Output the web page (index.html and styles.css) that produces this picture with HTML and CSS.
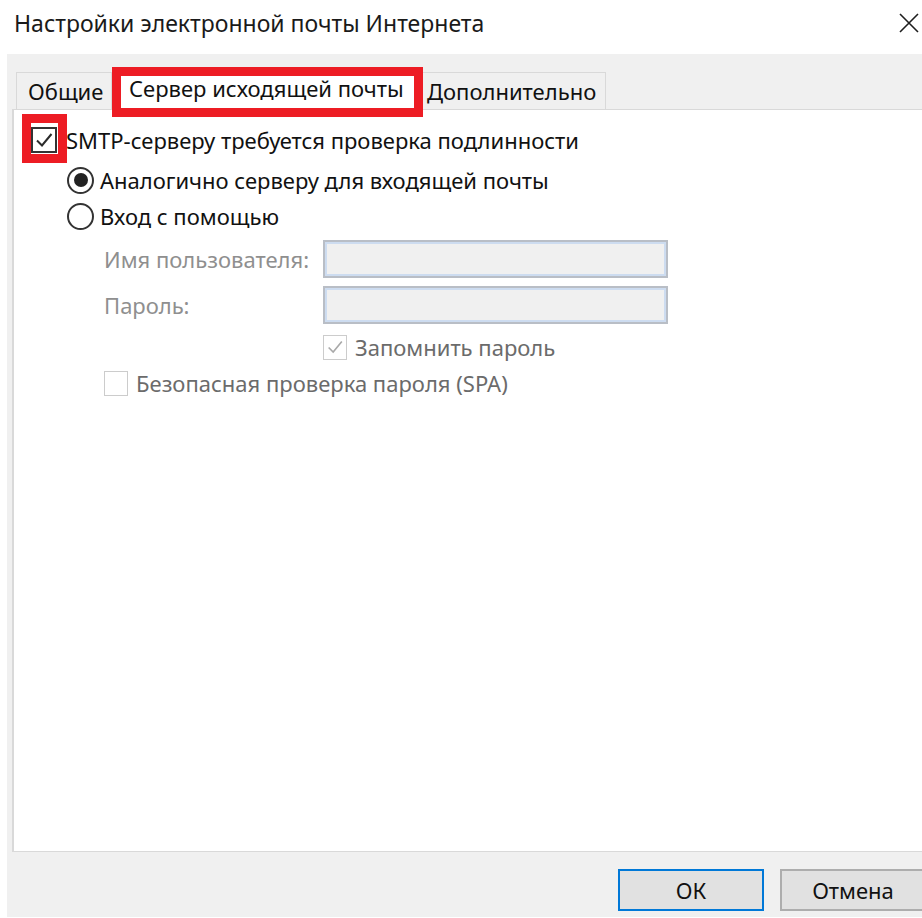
FILE: index.html
```html
<!DOCTYPE html>
<html lang="ru">
<head>
<meta charset="utf-8">
<title>Настройки электронной почты Интернета</title>
<link rel="stylesheet" href="styles.css">
</head>
<body>
<div class="window">
  <div class="titlebar">
    <span class="title">Настройки электронной почты Интернета</span>
    <span class="close" aria-label="Закрыть">
      <svg width="20" height="20" viewBox="0 0 20 20"><path d="M1 1L19 19M19 1L1 19" stroke="#1e1e1e" stroke-width="1.6" fill="none"/></svg>
    </span>
  </div>

  <div class="client">
    <div class="tabs">
      <div class="tab tab-first">Общие</div>
      <div class="tab tab-active">Сервер исходящей почты</div>
      <div class="tab tab-last">Дополнительно</div>
    </div>

    <div class="panel">
      <label class="row row-auth">
        <span class="check checked">
          <svg viewBox="0 0 22 22" width="22" height="22"><path d="M4 11.5L9 16.5L18.5 5" stroke="#2b2b2b" stroke-width="2" fill="none"/></svg>
        </span>
        <span class="text">SMTP-серверу требуется проверка подлинности</span>
      </label>

      <label class="row row-radio1">
        <span class="radio on"><span class="dot"></span></span>
        <span class="text">Аналогично серверу для входящей почты</span>
      </label>

      <label class="row row-radio2">
        <span class="radio"></span>
        <span class="text">Вход с помощью</span>
      </label>

      <div class="field field-user">
        <span class="field-label">Имя пользователя:</span>
        <span class="input"></span>
      </div>

      <div class="field field-pass">
        <span class="field-label">Пароль:</span>
        <span class="input"></span>
      </div>

      <label class="row row-remember">
        <span class="check small disabled">
          <svg viewBox="0 0 22 22" width="20" height="20"><path d="M4 11.5L9 16.5L18.5 5" stroke="#a9a9a9" stroke-width="1.8" fill="none"/></svg>
        </span>
        <span class="text text-dim">Запомнить пароль</span>
      </label>

      <label class="row row-spa">
        <span class="check small disabled"></span>
        <span class="text text-dim">Безопасная проверка пароля (SPA)</span>
      </label>
    </div>

    <div class="footer">
      <button class="btn btn-default">ОК</button>
      <button class="btn">Отмена</button>
    </div>
  </div>

  <!-- red callout frames drawn over the dialog -->
  <div class="callout callout-tab"></div>
  <div class="callout callout-check"></div>
</div>
</body>
</html>
```

FILE: styles.css
```css
* {
  box-sizing: border-box;
}

html, body {
  margin: 0;
  padding: 0;
  background: #ffffff;
}

body {
  width: 922px;
  height: 918px;
  overflow: hidden;
  font-family: "Noto Sans", "Open Sans", sans-serif;
  font-size: 22px;
  color: #111111;
}

.window {
  position: relative;
  width: 922px;
  height: 918px;
}

/* title bar */
.titlebar {
  height: 54px;
  display: flex;
  align-items: center;
  justify-content: space-between;
  padding: 0 3px 8px 14px;
  background: #ffffff;
}

.title {
  font-size: 23px;
  color: #1a1a1a;
  white-space: nowrap;
}

.close {
  display: flex;
  width: 20px;
  height: 20px;
}

/* grey client area */
.client {
  margin-left: 7px;
  height: 863px;
  background: #f0f0f0;
  padding: 18px 0 0 5px;
  display: flex;
  flex-direction: column;
}

/* tab strip */
.tabs {
  display: flex;
  align-items: flex-end;
  height: 37px;
  padding-left: 4px;
}

.tab {
  height: 37px;
  display: flex;
  align-items: center;
  border: 1px solid #d9d9d9;
  border-bottom: none;
  background: #f0f0f0;
  color: #111111;
  white-space: nowrap;
  overflow: hidden;
}

.tab + .tab {
  border-left: none;
}

.tab-first {
  width: 96px;
  padding-left: 11px;
}

.tab-active {
  width: 309px;
  background: #ffffff;
  height: 42px;
  padding: 0 0 4px 17px;
  margin-bottom: -1px;
  position: relative;
  z-index: 1;
}

.tab-last {
  width: 185px;
  padding-left: 6px;
}

/* tab page */
.panel {
  height: 743px;
  background: #ffffff;
  border: 1px solid #d9d9d9;
  border-right: none;
  border-left-width: 2px;
  padding: 12px 0 0 17px;
}

.row {
  display: flex;
  align-items: center;
  height: 36px;
}

.row .text {
  white-space: nowrap;
}

.row-auth .text {
  margin-left: 9px;
}

.row-radio1 {
  margin-top: 4px;
  padding-left: 36px;
}

.row-radio2 {
  padding-left: 36px;
}

.row-radio1 .text,
.row-radio2 .text {
  margin-left: 6px;
}

/* checkboxes */
.check {
  width: 26px;
  height: 26px;
  border: 2px solid #333333;
  background: #ffffff;
  display: flex;
  align-items: center;
  justify-content: center;
  flex: none;
}

.check.small {
  width: 24px;
  height: 25px;
  border-width: 1px;
}

.check.disabled {
  border-color: #cccccc;
}

/* radio buttons */
.radio {
  width: 27px;
  height: 27px;
  border: 2px solid #333333;
  border-radius: 50%;
  background: #ffffff;
  display: flex;
  align-items: center;
  justify-content: center;
  flex: none;
}

.radio .dot {
  width: 14px;
  height: 14px;
  border-radius: 50%;
  background: #222222;
}

/* disabled login fields */
.field {
  display: flex;
  align-items: center;
  padding-left: 73px;
}

.field-user {
  margin-top: 6px;
}

.field-pass {
  margin-top: 8px;
}

.field-label {
  width: 219px;
  color: #8f8f8f;
  white-space: nowrap;
}

.input {
  width: 345px;
  height: 38px;
  background: #f0f0f0;
  border: 2px solid #b9bec6;
  box-shadow: inset 0 0 0 2px #cddcf0;
}

.row-remember {
  margin-top: 5px;
  padding-left: 292px;
}

.row-spa {
  padding-left: 73px;
}

.row-remember .text,
.row-spa .text {
  margin-left: 8px;
}

.text-dim {
  color: #6b6b6b;
}

/* dialog buttons */
.footer {
  display: flex;
  justify-content: flex-end;
  gap: 16px;
  padding-top: 17px;
  margin-right: -4px;
}

.btn {
  flex: none;
  width: 146px;
  height: 42px;
  font-family: inherit;
  font-size: 22px;
  color: #111111;
  background: #e1e1e1;
  border: 2px solid #adadad;
  padding: 0;
}

.btn-default {
  border-color: #0078d7;
}

/* red annotation frames */
.callout {
  position: absolute;
  border: 9px solid #ed1c24;
  pointer-events: none;
  z-index: 5;
}

.callout-tab {
  left: 112px;
  top: 67px;
  width: 311px;
  height: 50px;
}

.callout-check {
  left: 22px;
  top: 114px;
  width: 45px;
  height: 49px;
}
```
